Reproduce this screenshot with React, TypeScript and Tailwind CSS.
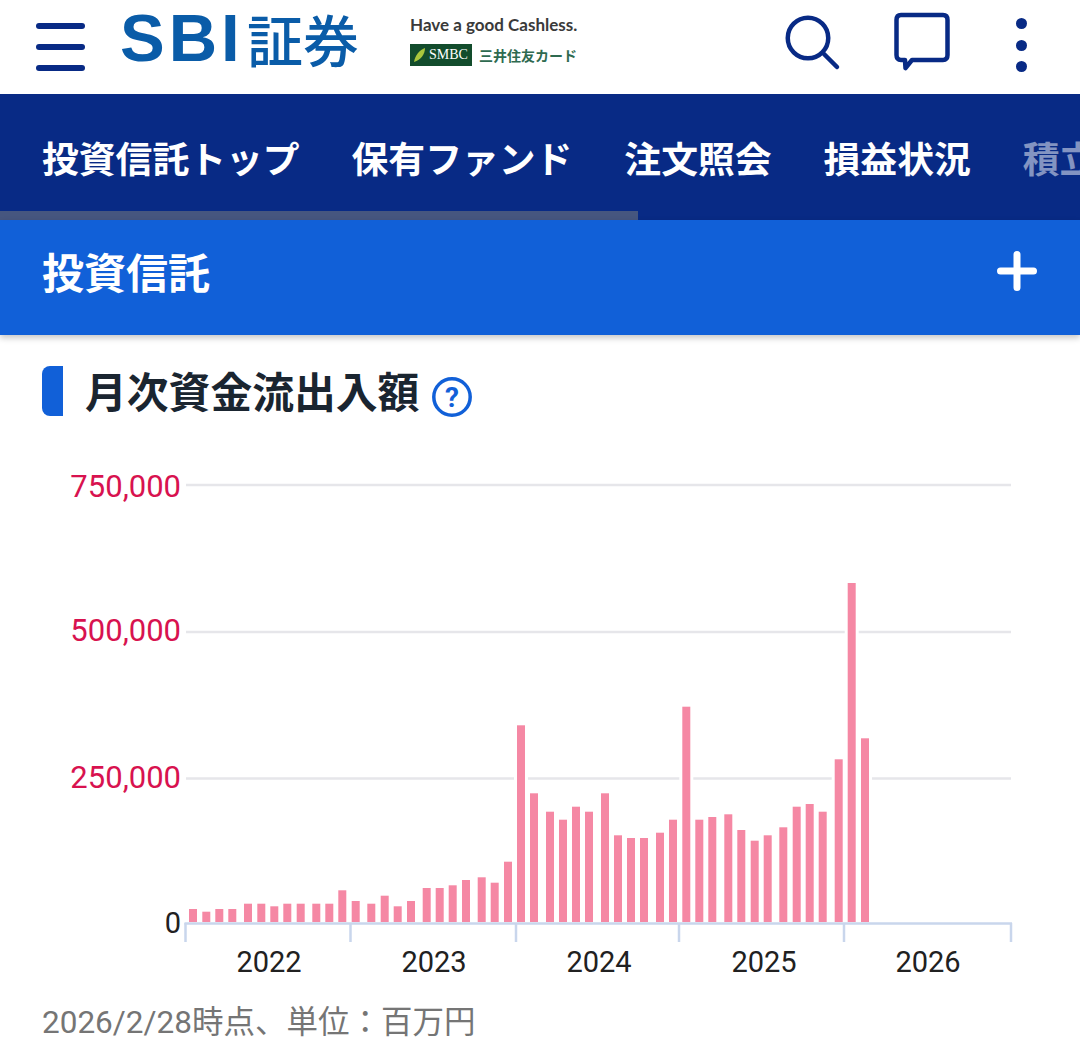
const BARS: [number, number][] = [
  [189, 909], [202.3, 911.7], [215.3, 909], [228.3, 909], [244, 903.7], [257.3, 903.7], [270.3, 906.3], [283.3, 903.7],
  [296.7, 903.7], [312.3, 903.7], [325.3, 903.7], [338.3, 890.3], [351.7, 901], [367.3, 903.7], [380.7, 895.7], [393.7, 906.3],
  [407, 901], [422.7, 888], [435.7, 888], [448.7, 885.3], [462, 880], [477.7, 877.3], [490.7, 882.7], [504, 861.7],
  [517, 725.3], [530, 793.3], [546, 811.7], [559, 819.7], [572, 806.7], [585, 811.7], [601, 793.3], [614, 835.3],
  [627, 838], [640, 838], [656, 832.7], [669, 819.7], [682.3, 706.7], [695.3, 819.7], [708.3, 817], [724.3, 814.3],
  [737.3, 830], [750.7, 840.7], [763.7, 835.3], [779.3, 827.3], [792.7, 806.7], [805.7, 804], [818.7, 811.7], [834.7, 759.3],
  [847.7, 583], [861, 738.3],
];

const GRID = [
  { y: 485, ty: 497, label: "750,000" },
  { y: 632, ty: 641, label: "500,000" },
  { y: 778.5, ty: 788, label: "250,000" },
];
const TICKS = [185.5, 350.5, 516, 679, 844, 1011];
const YEARS: [number, string][] = [[269, "2022"], [434, "2023"], [599, "2024"], [764, "2025"], [928, "2026"]];

function Header() {
  return (
    <header className="h-[94px] bg-white flex items-start">
      <div className="ml-[36px] mt-[23px] w-[49px] h-[48px] flex flex-col justify-between">
        <div className="h-[6px] rounded-full bg-[#082a85]" />
        <div className="h-[6px] rounded-full bg-[#082a85]" />
        <div className="h-[6px] rounded-full bg-[#082a85]" />
      </div>
      <div className="ml-[35px] mt-[4px] h-[68px] flex items-center text-[#0a5ca8] whitespace-nowrap">
        <span className="font-['Liberation_Sans',sans-serif] font-bold text-[67px] leading-[68px] w-[127px] tracking-[4px]">SBI</span>
        <span className="font-['Noto_Sans_CJK_JP',sans-serif] font-medium text-[56px] leading-[68px]">証券</span>
      </div>
      <div className="ml-[51px] mt-[14px] w-[170px] flex flex-col">
        <div className="font-['Lato',sans-serif] font-bold text-[17px] leading-[22px] text-[#3a3a3a] whitespace-nowrap">Have a good Cashless.</div>
        <div className="mt-[8px] flex items-center gap-[7px]">
          <div className="w-[62px] h-[22px] bg-[#124c2c] flex items-center pl-[3px] gap-[3px]">
            <svg viewBox="0 0 13 16" className="w-[13px] h-[16px]">
              <path d="M1 15 C2 9 6 3 12 1 C12 7 8 13 1 15Z" fill="#a9c63d" />
            </svg>
            <span className="font-['Liberation_Serif',serif] text-[14px] text-white leading-none">SMBC</span>
          </div>
          <span className="font-['Noto_Sans_CJK_JP',sans-serif] font-bold text-[14px] leading-none text-[#2e6a50] whitespace-nowrap">三井住友カード</span>
        </div>
      </div>
      <svg viewBox="0 0 60 70" className="ml-[202px] mt-[10px] w-[60px] h-[70px]" fill="none" stroke="#082a85" strokeWidth="4.5" strokeLinecap="round">
        <circle cx="26" cy="28" r="20.25" />
        <path d="M42 44 L55 57" />
      </svg>
      <svg viewBox="0 0 60 62" className="ml-[51px] mt-[11px] w-[60px] h-[62px]" fill="none" stroke="#082a85" strokeWidth="4.5" strokeLinejoin="round">
        <path d="M8 4 H50 Q54.5 4 54.5 9 V44 Q54.5 49 50 49 H19 L12.5 57 L12 49 H8 Q3.5 49 3.5 44 V9 Q3.5 4 8 4Z" />
      </svg>
      <div className="ml-[63px] mt-[18px] h-[54px] w-[11px] flex flex-col justify-between">
        <div className="w-[11px] h-[11px] rounded-full bg-[#082a85]" />
        <div className="w-[11px] h-[11px] rounded-full bg-[#082a85]" />
        <div className="w-[11px] h-[11px] rounded-full bg-[#082a85]" />
      </div>
    </header>
  );
}

function Tabs() {
  return (
    <nav className="h-[126px] bg-[#082a85] flex flex-col overflow-hidden">
      <div className="flex-1 pt-[9px] pl-[42px] flex items-center gap-[52px] whitespace-nowrap text-white font-bold text-[36.8px] leading-none">
        <span>投資信託トップ</span>
        <span>保有ファンド</span>
        <span>注文照会</span>
        <span>損益状況</span>
        <span className="text-white/50">積立</span>
      </div>
      <div className="h-[9px] w-[638px] bg-[#46567f]" />
    </nav>
  );
}

function Accordion() {
  return (
    <div className="relative h-[115px] bg-[#1160d8] pl-[42px] pr-[43px] pb-[14px] flex items-center justify-between shadow-[0_3px_6px_rgba(0,0,0,0.22)]">
      <span className="text-white font-bold text-[42px] leading-none">投資信託</span>
      <svg viewBox="0 0 40 40" className="w-[40px] h-[40px]" stroke="#fff" strokeWidth="7" strokeLinecap="round">
        <path d="M20 3.5 V36.5 M3.5 20 H36.5" />
      </svg>
    </div>
  );
}

function Title() {
  return (
    <div className="mt-[31px] ml-[42px] h-[50px] flex items-center">
      <div className="w-[21px] h-[50px] rounded-l-[8px] bg-[#1160d8]" />
      <h2 className="ml-[22px] text-[#1a2530] font-bold text-[41.8px] leading-none whitespace-nowrap">月次資金流出入額</h2>
      <svg viewBox="0 0 40 40" className="ml-[13px] mt-[12px] w-[40px] h-[40px]">
        <circle cx="20" cy="20" r="18.2" fill="none" stroke="#1160d8" strokeWidth="3.5" />
        <text x="20" y="30" textAnchor="middle" fontFamily="Roboto, sans-serif" fontWeight="700" fontSize="28" fill="#1160d8">?</text>
      </svg>
    </div>
  );
}

function Chart() {
  return (
    <svg viewBox="0 450 1080 540" className="block mt-[34px] w-[1080px] h-[540px]">
      {GRID.map((g) => (
        <g key={g.y}>
          <line x1="186" x2="1011" y1={g.y} y2={g.y} stroke="#e6e6ea" strokeWidth="2.5" />
          <text x="181" y={g.ty} textAnchor="end" fontFamily="Roboto, sans-serif" fontSize="31" fill="#d8124f">{g.label}</text>
        </g>
      ))}
      <text x="181" y="933" textAnchor="end" fontFamily="Roboto, sans-serif" fontSize="29" fill="#212121">0</text>
      {BARS.map(([x, top]) => (
        <rect key={`w${x}`} x={x - 3} y={top} width={14} height={922 - top} fill="#fff" />
      ))}
      {BARS.map(([x, top]) => (
        <rect key={x} x={x} y={top} width={8} height={922 - top} fill="#f588a4" />
      ))}
      <line x1="184.5" x2="1012" y1="923.5" y2="923.5" stroke="#c9d6ec" strokeWidth="2.5" />
      {TICKS.map((x) => (
        <line key={x} x1={x} x2={x} y1="923" y2="942" stroke="#c9d6ec" strokeWidth="2.5" />
      ))}
      {YEARS.map(([x, label]) => (
        <text key={label} x={x} y="972" textAnchor="middle" fontFamily="Roboto, sans-serif" fontSize="29" fill="#212121">{label}</text>
      ))}
    </svg>
  );
}

export default function App() {
  return (
    <div className="w-[1080px] h-[1053px] overflow-hidden bg-white font-['Noto_Sans_CJK_JP',sans-serif]">
      <Header />
      <Tabs />
      <Accordion />
      <Title />
      <Chart />
      <p className="mt-[11px] ml-[42px] text-[#757575] text-[31.5px] leading-[44px] whitespace-nowrap font-['Roboto','Noto_Sans_CJK_JP',sans-serif]">2026/2/28時点、単位：百万円</p>
    </div>
  );
}
